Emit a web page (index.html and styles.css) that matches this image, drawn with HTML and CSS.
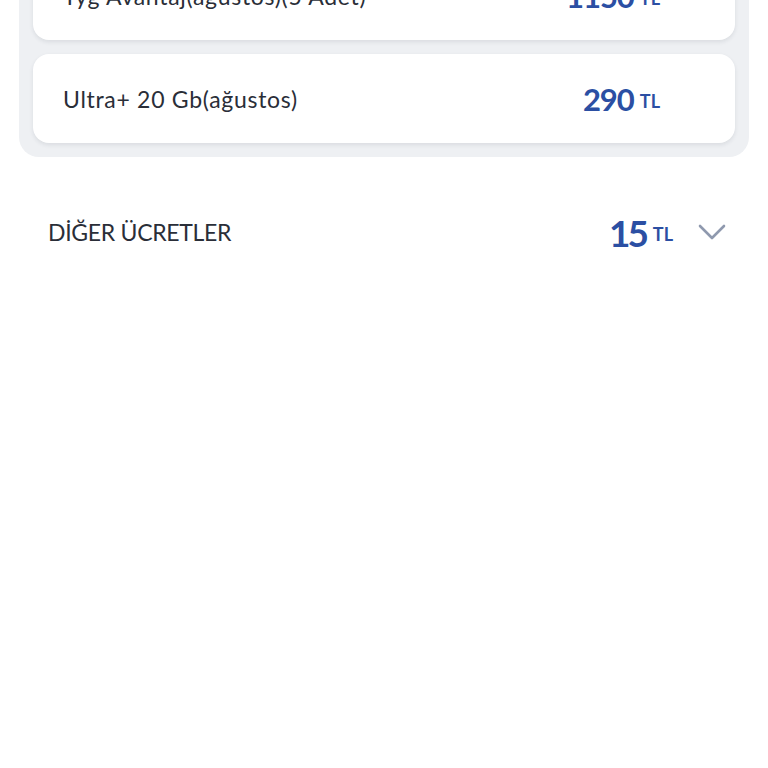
FILE: index.html
```html
<!DOCTYPE html>
<html lang="tr">
<head>
    <meta charset="UTF-8">
    <meta name="viewport" content="width=device-width, initial-scale=1.0">
    <title>Fatura detayı</title>
    <link rel="stylesheet" href="styles.css">
</head>
<body>
    <div class="panel">
        <div class="item">
            <span class="item-name">Tyg Avantaj(ağustos)(5 Adet)</span>
            <span class="price">1150<small>TL</small></span>
        </div>
        <div class="item">
            <span class="item-name">Ultra+ 20 Gb(ağustos)</span>
            <span class="price">290<small>TL</small></span>
        </div>
    </div>

    <div class="other">
        <span class="other-title">DİĞER ÜCRETLER</span>
        <span class="other-price">15<small>TL</small></span>
        <svg class="chevron" width="28" height="16" viewBox="0 0 28 16">
            <path d="M2 2 L14 14 L26 2" fill="none" stroke="#8f99ae" stroke-width="2.6" stroke-linecap="round" stroke-linejoin="round"/>
        </svg>
    </div>
</body>
</html>
```

FILE: styles.css
```css
body {
    margin: 0;
    background-color: #ffffff;
    font-family: Lato, "Noto Sans", sans-serif;
    color: #2a2e38;
}

.panel {
    margin: -63px 19px 0 19px;
    padding: 14px;
    background-color: #eef0f3;
    border-radius: 20px;
    display: flex;
    flex-direction: column;
    gap: 14px;
}

.item {
    height: 89px;
    background-color: #ffffff;
    border-radius: 16px;
    box-shadow: 0 2px 4px rgba(40, 50, 70, 0.10);
    display: flex;
    align-items: center;
    justify-content: space-between;
    padding: 0 75px 0 30px;
}

.item-name {
    font-size: 23px;
    letter-spacing: 0.7px;
}

.price {
    color: #2b4fa3;
    font-weight: bold;
    font-size: 31px;
    letter-spacing: -1px;
}

.price small,
.other-price small {
    font-size: 18px;
    margin-left: 6px;
    letter-spacing: 0;
    position: relative;
    top: -3px;
}

.other {
    display: flex;
    align-items: center;
    padding: 0 42px 0 48px;
    height: 150px;
}

.other-title {
    font-size: 23px;
    letter-spacing: -0.3px;
    flex: 1;
}

.other-price {
    color: #2b4fa3;
    font-weight: bold;
    font-size: 37px;
    letter-spacing: -3px;
}

.other-price small {
    top: -6px;
    margin-left: 7px;
}

.chevron {
    margin-left: 25px;
}
```
